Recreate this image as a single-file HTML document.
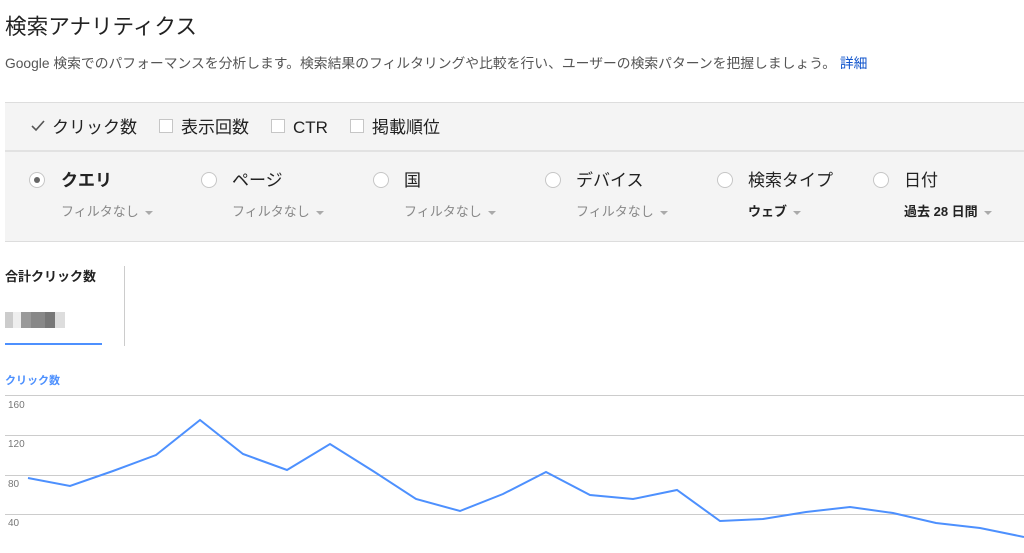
<!DOCTYPE html>
<html><head><meta charset="utf-8"><style>
body{margin:0;width:1024px;height:553px;overflow:hidden;background:#fff;font-family:"Liberation Sans","Noto Sans CJK JP",sans-serif;position:relative;color:#222}
.a{position:absolute;white-space:nowrap;line-height:1}
.cb{position:absolute;width:12px;height:12px;border:1px solid #c6c6c6;background:#fff}
.rd{position:absolute;width:14px;height:14px;border:1px solid #c6c6c6;border-radius:50%;background:#fff}
.lbl{font-size:17px;color:#222}
.sub{font-size:13px;color:#888}
.tri{display:inline-block;width:0;height:0;border-left:4px solid transparent;border-right:4px solid transparent;border-top:4px solid #aaa;margin-left:6px;vertical-align:middle}
</style></head><body>
<div class="a" style="left:5px;top:16px;font-size:21.6px;color:#222">検索アナリティクス</div>
<div class="a" style="left:5px;top:57px;font-size:13.8px;color:#555">Google 検索でのパフォーマンスを分析します。検索結果のフィルタリングや比較を行い、ユーザーの検索パターンを把握しましょう。 <span style="color:#15c">詳細</span></div>
<div class="a" style="left:5px;top:102px;width:1019px;height:138px;background:#f4f4f4;border-top:1px solid #ddd;border-bottom:1px solid #ddd"></div>
<div class="a" style="left:5px;top:150px;width:1019px;height:2px;background:#e2e2e2"></div>
<svg class="a" style="left:31px;top:120px" width="14" height="12"><path d="M1 6 L5 10 L13 1" fill="none" stroke="#555" stroke-width="1.6"/></svg>
<div class="a lbl" style="left:52px;top:119px">クリック数</div>
<div class="cb" style="left:159px;top:119px"></div><div class="a lbl" style="left:181px;top:119px">表示回数</div>
<div class="cb" style="left:271px;top:119px"></div><div class="a lbl" style="left:293px;top:119px">CTR</div>
<div class="cb" style="left:350px;top:119px"></div><div class="a lbl" style="left:372px;top:119px">掲載順位</div>

<div class="rd" style="left:29px;top:172px"><div style="position:absolute;left:4px;top:4px;width:6px;height:6px;border-radius:50%;background:#666"></div></div>
<div class="a lbl" style="left:61px;top:172px;font-weight:bold">クエリ</div>
<div class="a sub" style="left:61px;top:205px">フィルタなし<span class="tri"></span></div>
<div class="rd" style="left:201px;top:172px"></div>
<div class="a lbl" style="left:232px;top:172px">ページ</div>
<div class="a sub" style="left:232px;top:205px">フィルタなし<span class="tri"></span></div>
<div class="rd" style="left:373px;top:172px"></div>
<div class="a lbl" style="left:404px;top:172px">国</div>
<div class="a sub" style="left:404px;top:205px">フィルタなし<span class="tri"></span></div>
<div class="rd" style="left:545px;top:172px"></div>
<div class="a lbl" style="left:576px;top:172px">デバイス</div>
<div class="a sub" style="left:576px;top:205px">フィルタなし<span class="tri"></span></div>
<div class="rd" style="left:717px;top:172px"></div>
<div class="a lbl" style="left:748px;top:172px">検索タイプ</div>
<div class="a sub" style="left:748px;top:205px;color:#222;font-weight:bold">ウェブ<span class="tri"></span></div>
<div class="rd" style="left:873px;top:172px"></div>
<div class="a lbl" style="left:904px;top:172px">日付</div>
<div class="a sub" style="left:904px;top:205px;color:#222;font-weight:bold">過去 28 日間<span class="tri"></span></div>

<div class="a" style="left:5px;top:270px;font-size:13px;font-weight:bold">合計クリック数</div>
<div class="a" style="left:5px;top:312px;width:60px;height:16px;background:linear-gradient(90deg,#ccc 0 8px,#eee 8px 16px,#999 16px 26px,#888 26px 40px,#777 40px 50px,#ddd 50px 60px)"></div>
<div class="a" style="left:5px;top:343px;width:97px;height:2px;background:#4d90fe"></div>
<div class="a" style="left:124px;top:266px;width:1px;height:80px;background:#ccc"></div>
<div class="a" style="left:5px;top:376px;font-size:11px;font-weight:bold;color:#4d90fe">クリック数</div>
<svg class="a" style="left:0;top:0" width="1024" height="553">
<g stroke="#ccc" stroke-width="1"><line x1="5" y1="395.5" x2="1024" y2="395.5"/><line x1="5" y1="435.5" x2="1024" y2="435.5"/><line x1="5" y1="475.5" x2="1024" y2="475.5"/><line x1="5" y1="514.5" x2="1024" y2="514.5"/></g>
<g font-family="Liberation Sans" font-size="10" fill="#777"><text x="8" y="408">160</text><text x="8" y="447">120</text><text x="8" y="487">80</text><text x="8" y="526">40</text></g>
<polyline fill="none" stroke="#4d90fe" stroke-width="2" points="28,478 70,486 113,471 156,455 200,420 243,454 287,470 330,444 373,471 416,499 460,511 503,494 546,472 590,495 633,499 677,490 720,521 763,519 806,512 850,507 893,513 936,523 980,528 1024,537"/>
</svg>
</body></html>
